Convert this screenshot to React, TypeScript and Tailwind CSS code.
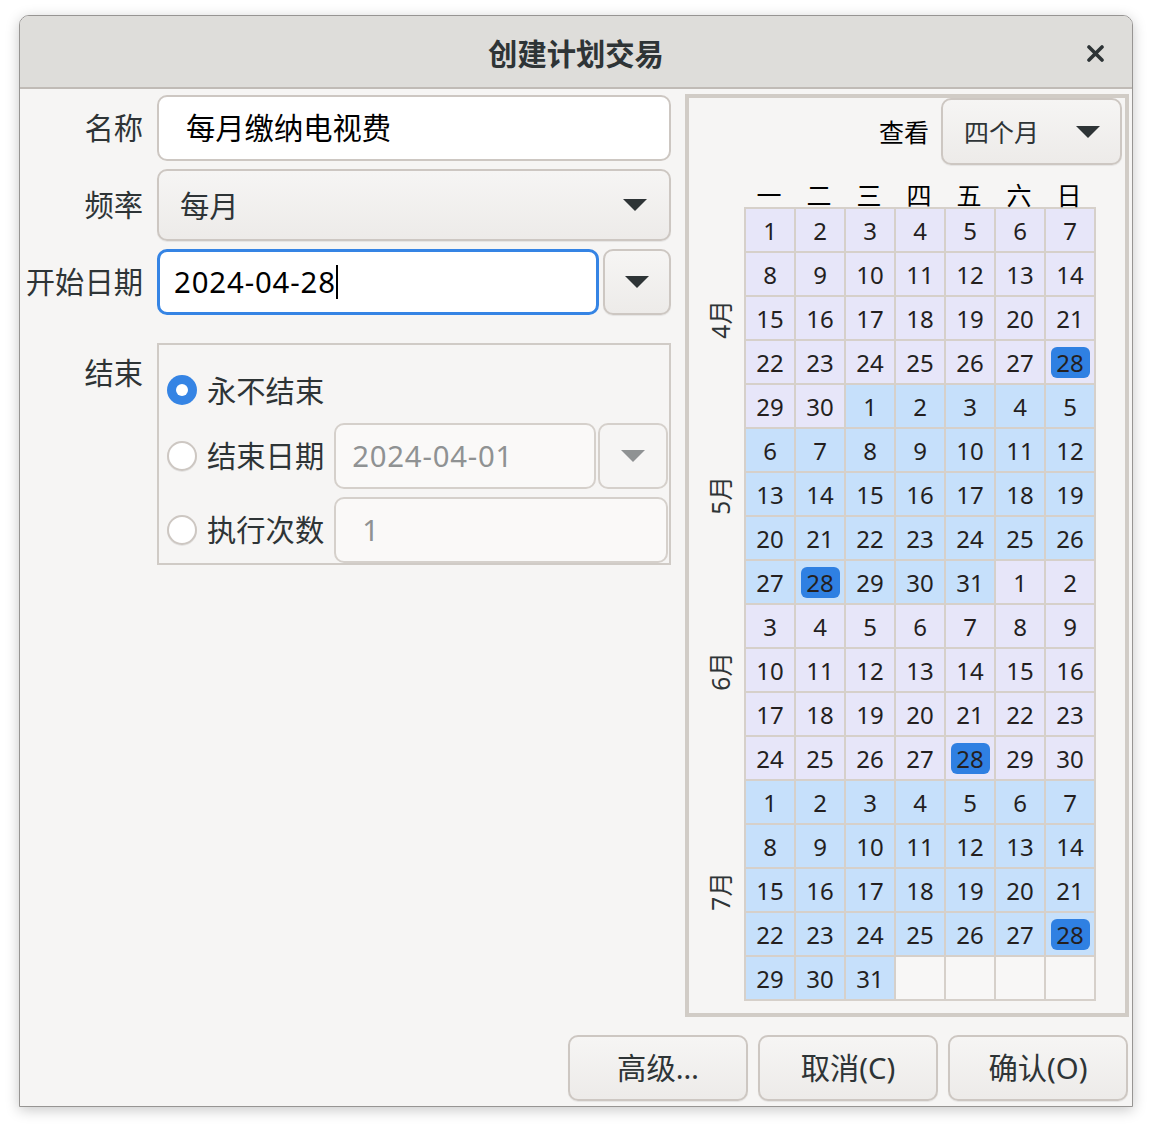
import React from "react";

const font = "font-[family-name:'Noto_Sans','Noto_Sans_CJK_SC',sans-serif]";

type Day = { day: number; month: number } | null;

function buildWeeks(): Day[][] {
  const weeks: Day[][] = [];
  const start = new Date(2024, 3, 1);
  for (let w = 0; w < 18; w++) {
    const row: Day[] = [];
    for (let i = 0; i < 7; i++) {
      const d = new Date(start);
      d.setDate(start.getDate() + w * 7 + i);
      row.push(d.getMonth() > 6 ? null : { day: d.getDate(), month: d.getMonth() });
    }
    weeks.push(row);
  }
  return weeks;
}

const weeks = buildWeeks();

function Arrow({ muted = false }: { muted?: boolean }) {
  return (
    <svg width="24" height="12" viewBox="0 0 24 12">
      <path d="M0 0H24L12 12Z" fill={muted ? "#8f9293" : "#2e3436"} />
    </svg>
  );
}

function Radio({ checked }: { checked?: boolean }) {
  if (checked) {
    return (
      <div className="w-[30px] h-[30px] rounded-full bg-[#3584e4] flex items-center justify-center shrink-0">
        <div className="w-[12px] h-[12px] rounded-full bg-white" />
      </div>
    );
  }
  return (
    <div className="w-[30px] h-[30px] rounded-full bg-white border-2 border-[#cdc7c2] shadow-[0_1px_0_rgba(0,0,0,0.07)] shrink-0" />
  );
}

const btn =
  "rounded-[10px] border-2 border-[#cdc7c2] bg-gradient-to-b from-[#f6f5f4] to-[#edebe9] shadow-[0_1px_1px_rgba(0,0,0,0.07)]";

export default function App() {
  return (
    <div className={`w-[1152px] h-[1126px] bg-white pt-[15px] pl-[19px] text-[#2e3436] ${font}`}>
      <div className="w-[1114px] h-[1092px] flex flex-col border border-[#979593] rounded-t-[10px] bg-[#f6f5f4] shadow-[0_3px_14px_rgba(0,0,0,0.22)] overflow-hidden">
        {/* Title bar */}
        <div className="h-[73px] shrink-0 flex items-center justify-center relative bg-[#deddda] border-b-2 border-[#c0bbb6] pt-[6px]">
          <span className="text-[29.3px] font-bold">创建计划交易</span>
          <svg className="absolute right-[28px] top-[29px]" width="17" height="17" viewBox="0 0 17 17">
            <path d="M2 2L15 15M15 2L2 15" stroke="#2e3436" strokeWidth="3.6" strokeLinecap="round" />
          </svg>
        </div>

        {/* Body */}
        <div className="flex-1 flex flex-col pt-[5px] pl-[4px] pr-[3px] pb-[5px]">
          <div className="flex gap-[14px]">
            {/* Left form */}
            <div className="flex flex-col">
              <div className="flex gap-[14px] mt-[1px]">
                <div className="w-[119px] h-[66px] flex items-center justify-end text-[29.3px] pt-[1px]">名称</div>
                <div className="w-[514px] h-[66px] rounded-[10px] border-2 border-[#cdc7c2] bg-white pl-[27px] pt-[2px] flex items-center text-[29.3px] text-black">
                  每月缴纳电视费
                </div>
              </div>
              <div className="flex gap-[14px] mt-[8px]">
                <div className="w-[119px] h-[72px] flex items-center justify-end text-[29.3px] pt-[2px]">频率</div>
                <div className={`w-[514px] h-[72px] ${btn} pl-[21px] pr-[22px] flex items-center justify-between text-[29.3px]`}>
                  <span className="pt-[3px]">每月</span>
                  <Arrow />
                </div>
              </div>
              <div className="flex gap-[14px] mt-[8px]">
                <div className="w-[119px] h-[66px] flex items-center justify-end text-[29.3px] whitespace-nowrap pt-[1px]">开始日期</div>
                <div className="flex gap-[4px]">
                  <div className="w-[442px] h-[66px] rounded-[10px] border-[3px] border-[#3584e4] bg-white pl-[14px] flex items-center text-[29.3px] text-black">
                    <span className="tracking-[0.9px] pt-[2px]">2024-04-28</span>
                    <span className="w-[2px] h-[34px] bg-black" />
                  </div>
                  <div className={`w-[68px] h-[66px] ${btn} flex items-center justify-center`}>
                    <Arrow />
                  </div>
                </div>
              </div>
              <div className="flex gap-[14px] mt-[28px]">
                <div className="w-[119px] h-[50px] flex items-end justify-end text-[29.3px] leading-[40px]">结束</div>
                <div className="w-[514px] h-[222px] border-2 border-[#d0cbc6] pt-[12px] pl-[8px] flex flex-col">
                  <div className="h-[66px] flex items-center gap-[10px] text-[29.3px]">
                    <Radio checked />
                    <span className="whitespace-nowrap pt-[4px]">永不结束</span>
                  </div>
                  <div className="h-[66px] flex items-center gap-[10px] text-[29.3px]">
                    <Radio />
                    <span className="whitespace-nowrap pt-[2px]">结束日期</span>
                    <div className="flex gap-[2px]">
                      <div className="w-[262px] h-[66px] rounded-[10px] border-2 border-[#d5d0cb] bg-[#faf9f8] pl-[16px] pt-[2px] flex items-center text-[#8f9293] tracking-[0.8px]">
                        2024-04-01
                      </div>
                      <div className="w-[70px] h-[66px] rounded-[10px] border-2 border-[#d5d0cb] bg-[#f6f5f4] flex items-center justify-center">
                        <Arrow muted />
                      </div>
                    </div>
                  </div>
                  <div className="h-[66px] mt-[8px] flex items-center gap-[10px] text-[29.3px]">
                    <Radio />
                    <span className="whitespace-nowrap pt-[2px]">执行次数</span>
                    <div className="w-[334px] h-[66px] rounded-[10px] border-2 border-[#d5d0cb] bg-[#faf9f8] pl-[26px] pt-[2px] flex items-center text-[#8f9293]">
                      1
                    </div>
                  </div>
                </div>
              </div>
            </div>

            {/* Calendar panel */}
            <div className="w-[444px] h-[923px] border-4 border-[#d1ccc6] flex flex-col">
              <div className="flex items-center justify-end gap-[12px] pr-[3px]">
                <span className="text-[25px] text-black pt-[2px]">查看</span>
                <div className={`w-[181px] h-[67px] ${btn} pl-[21px] pr-[20px] flex items-center justify-between text-[25px]`}>
                  <span className="pt-[2px]">四个月</span>
                  <Arrow />
                </div>
              </div>
              <div className="flex pl-[55px] mt-[16px] h-[26px] items-end">
                {["一", "二", "三", "四", "五", "六", "日"].map((w) => (
                  <div key={w} className="w-[50px] text-center text-[25px] leading-[28px] text-black translate-y-[2px]">
                    {w}
                  </div>
                ))}
              </div>
              <div className="flex">
                <div className="w-[55px] grid grid-rows-[repeat(18,44px)] pt-[2px] pl-[10px] text-[24.5px] text-[#2e3436]">
                  <div className="row-start-1 row-end-6 col-start-1 flex items-center justify-center">
                    <span className="-rotate-90 whitespace-nowrap">4月</span>
                  </div>
                  <div className="row-start-5 row-end-10 col-start-1 flex items-center justify-center">
                    <span className="-rotate-90 whitespace-nowrap">5月</span>
                  </div>
                  <div className="row-start-9 row-end-14 col-start-1 flex items-center justify-center">
                    <span className="-rotate-90 whitespace-nowrap">6月</span>
                  </div>
                  <div className="row-start-14 row-end-19 col-start-1 flex items-center justify-center">
                    <span className="-rotate-90 whitespace-nowrap">7月</span>
                  </div>
                </div>
                <div className="border-l-2 border-t-2 border-[#d6d0ca] flex flex-col">
                  {weeks.map((row, r) => (
                    <div key={r} className="flex">
                      {row.map((c, i) => (
                        <div
                          key={i}
                          className={`w-[50px] h-[44px] border-r-2 border-b-2 border-[#d6d0ca] flex items-center justify-center text-[24px] text-[#241f1f] pt-[1px] ${
                            c === null ? "bg-[#f8f7f6]" : c.month % 2 === 1 ? "bg-[#e7e6f9]" : "bg-[#c6e0fb]"
                          }`}
                        >
                          {c &&
                            (c.day === 28 ? (
                              <span className="w-[39px] h-[31px] rounded-[6px] bg-[#2f80e2] flex items-center justify-center">
                                28
                              </span>
                            ) : (
                              c.day
                            ))}
                        </div>
                      ))}
                    </div>
                  ))}
                </div>
              </div>
            </div>
          </div>

          {/* Buttons */}
          <div className="mt-[18px] flex justify-end gap-[10px] pr-[1px]">
            {["高级…", "取消(C)", "确认(O)"].map((t) => (
              <div key={t} className={`w-[180px] h-[66px] ${btn} flex items-center justify-center text-[29.3px] pt-[2px]`}>
                {t}
              </div>
            ))}
          </div>
        </div>
      </div>
    </div>
  );
}
